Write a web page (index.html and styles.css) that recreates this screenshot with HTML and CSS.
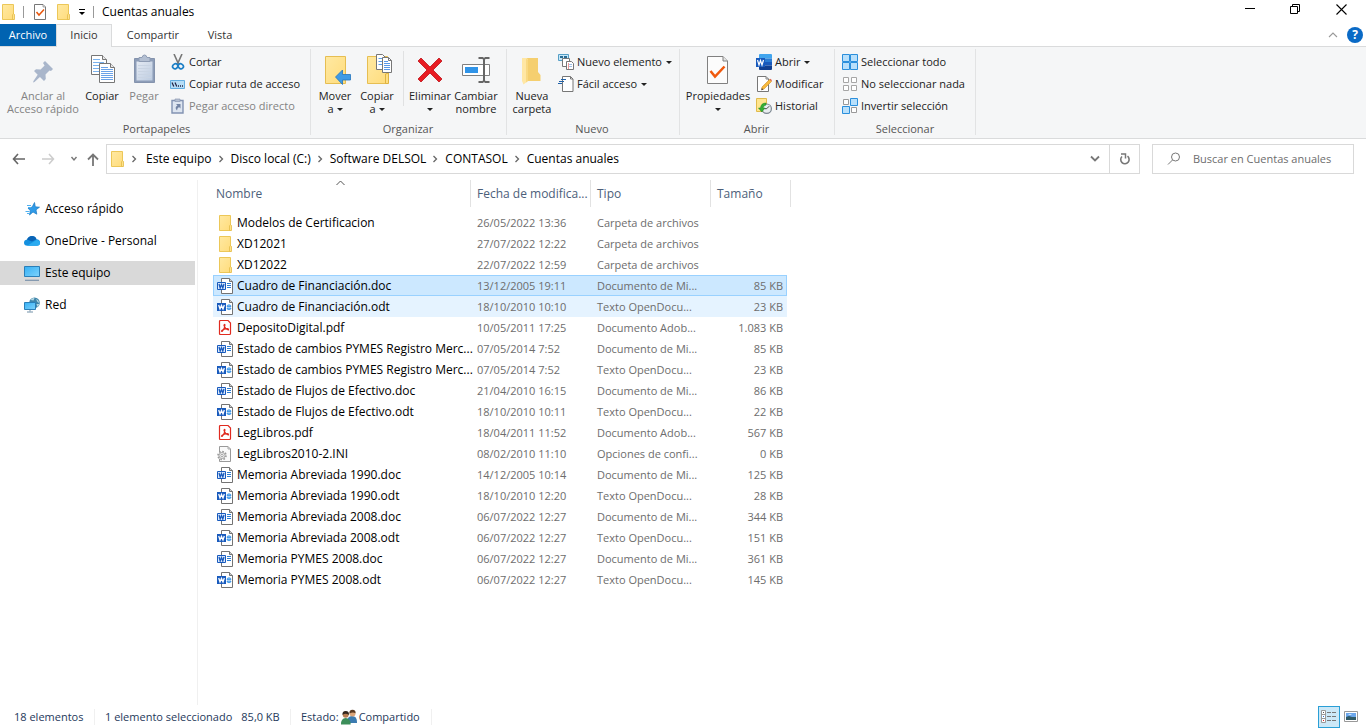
FILE: index.html
```html
<!DOCTYPE html>
<html lang="es">
<head>
<meta charset="utf-8">
<meta name="viewport" content="width=device-width, initial-scale=1">
<title>Cuentas anuales</title>
<link rel="stylesheet" href="styles.css">
</head>
<body>
<svg class="sprite" aria-hidden="true">
  <defs>
    <linearGradient id="gfold" x1="0" y1="0" x2="1" y2="1"><stop offset="0" stop-color="#ffe9a2"/><stop offset="1" stop-color="#ffdc7c"/></linearGradient>
    <linearGradient id="gscr" x1="0" y1="0" x2="1" y2="1"><stop offset="0" stop-color="#35b0f5"/><stop offset="1" stop-color="#7fd3fb"/></linearGradient>
    <linearGradient id="gpaste" x1="0" y1="0" x2="1" y2="1"><stop offset="0" stop-color="#e4eaf3"/><stop offset="1" stop-color="#bccbe0"/></linearGradient>
  </defs>
  <symbol id="folder" viewBox="0 0 16 16"><path d="M2.500.5h11v15h-11z" fill="url(#gfold)" stroke="#ecc758"/><path d="M12.500 15.500V11l1-1.500 1 1v5z" fill="#ffe28a" stroke="#e3bb48" stroke-width=".8"/></symbol>
  <symbol id="check" viewBox="0 0 16 16"><path d="M2.500.5h8.500l2.500 2.500v12.500h-11z" fill="#fff" stroke="#777"/><path d="M11 .5v2.500h2.500" fill="#ddd" stroke="#888" stroke-width=".7"/><path d="M4.500 8l2.500 3 5-5.500" fill="none" stroke="#e8560c" stroke-width="1.500"/></symbol>
  <symbol id="pin" viewBox="0 0 32 32"><g fill="#a9b6cb"><path d="M18 7l8 8-2 2-1.500-.6-4 4 .3 4.600-1.800 2-10-10 2-1.800 4.600.3 4-4L16 9z"/><path d="M11.500 19.500l2.500 2.500-6.500 6-1.500.5.500-1.500z"/></g></symbol>
  <symbol id="copy" viewBox="0 0 32 32"><path d="M5.500 1.500h11l4 4v15h-15z" fill="#fff" stroke="#767676"/><path d="M16.500 1.500v4h4" fill="#e8e8e8" stroke="#767676"/><path d="M7 5.500h7M7 8.500h11M7 11.500h11M7 14.500h11M7 17.500h11" stroke="#7ab2ee"/><path d="M13.500 9.500h11l4 4v15h-15z" fill="#fff" stroke="#767676"/><path d="M24.500 9.500v4h4" fill="#e8e8e8" stroke="#767676"/><path d="M15 13.500h7M15 15.500h12M15 17.500h12M15 19.500h12M15 21.500h12M15 23.500h12M15 25.500h12" stroke="#6aa2e8" /></symbol>
  <symbol id="paste" viewBox="0 0 32 32"><path d="M6.500 4.500h20v24h-20z" fill="#8d9db8" stroke="#8493ad"/><path d="M8.500 7.500h16v19h-16z" fill="url(#gpaste)"/><path d="M10 11.500h13M10 14.500h13M10 17.500h13M10 20.500h13M10 23.500h13" stroke="#c9d4e3"/><path d="M11 3.500h3q.5-2.500 2.500-2.500t2.500 2.500h3v4H11z" fill="#b3bfd2" stroke="#8e9cb4"/></symbol>
  <symbol id="cut" viewBox="0 0 16 16"><path d="M4 0l4.500 10M12 0L7.500 10" stroke="#777" stroke-width="1.600"/><ellipse cx="5.200" cy="12.300" rx="2.700" ry="2.300" transform="rotate(-35 5.200 12.300)" fill="none" stroke="#1c7fc6" stroke-width="1.700"/><ellipse cx="10.800" cy="12.300" rx="2.700" ry="2.300" transform="rotate(35 10.800 12.300)" fill="none" stroke="#1c7fc6" stroke-width="1.700"/></symbol>
  <symbol id="path" viewBox="0 0 16 16"><path d="M.5 4.500h14v8H.5z" fill="#b5ddf7" stroke="#63ade0"/><path d="M2 6.500l1.800 4M5 6.500l1.800 4" stroke="#224" stroke-width="1.200"/><path d="M8 10h1M10 10h1M12 10h1" stroke="#224" stroke-width="1.300"/></symbol>
  <symbol id="shortcut" viewBox="0 0 16 16"><path d="M2 2.500h11v12.500h-11z" fill="#dde5f0" stroke="#8293b2" stroke-width="1.400"/><path d="M5 1h5v2.500H5z" fill="#b5c0d2" stroke="#8c9ab3" stroke-width=".7"/><path d="M6 6h4.500v4.500L9 9q-2 1-2 3.500Q4 9.500 7.500 7.500z" fill="#7384a4"/></symbol>
  <symbol id="move" viewBox="0 0 32 32"><path d="M6.500 2.500h20v27h-20z" fill="url(#gfold)" stroke="#e6be52"/><path d="M16.500 23l7-7v4.500h8v5.500h-8v4.500z" fill="#3e9be6" stroke="#2375bd" stroke-width=".8"/></symbol>
  <symbol id="copyto" viewBox="0 0 32 32"><path d="M6.500 2.500h20v27h-20z" fill="url(#gfold)" stroke="#e6be52"/><path d="M24.500 29.500V20l3-1v10.500z" fill="#ffdf83" stroke="#dfb340"/><path d="M15.500.5h6l3 3v12h-9z" fill="#fff" stroke="#777"/><path d="M17.500 4.500h4M17.500 7.500h6M17.500 10.500h6" stroke="#5c9fe8"/><path d="M21.500 3.500h6l3 3v12h-9z" fill="#fff" stroke="#777"/><path d="M27.500 3.500v3h3" fill="none" stroke="#777"/><path d="M23 7.500h4M23 9.500h6M23 11.500h6M23 13.500h6M23 15.500h6" stroke="#5a98e6"/></symbol>
  <symbol id="delete" viewBox="0 0 32 32"><path d="M7 4l9 9 9-9 3 3-9 9 9 9-3 3-9-9-9 9-3-3 9-9-9-9z" fill="#e81c23" stroke="#bd1118" stroke-width=".8"/></symbol>
  <symbol id="rename" viewBox="0 0 32 32"><path d="M2.500 10.500h27v11h-27z" fill="#fff" stroke="#808080"/><path d="M5 13h13v6H5z" fill="#3094e8"/><path d="M18.500 4h4l1.500 1 1.500-1h4M18.500 28h4l1.500-1 1.500 1h4M24 5v22" fill="none" stroke="#666" stroke-width="2"/></symbol>
  <symbol id="newfolder" viewBox="0 0 32 32"><path d="M10 4h12v14l2.500 3v6H10z" fill="#f5cf6f"/><path d="M6 4h5l1 2v21l-4.500 3.500L6 27z" fill="#ffe7a5"/><path d="M12 6v21l-2 1.500V4.500z" fill="#f9d983"/></symbol>
  <symbol id="newitem" viewBox="0 0 16 16"><path d="M.5.500h10v6H.5z" fill="#c7e7f7" stroke="#559fc6"/><path d="M2 3h3M6 3h3" stroke="#2a6c94" stroke-width="2"/><path d="M4.500 4.500h7v8h-7z" fill="#fff" stroke="#777"/><path d="M8.500 7.500h5l2 2v6h-7z" fill="#fff" stroke="#777"/><path d="M10 10.500h4M10 12.500h4" stroke="#9bbfe8"/><path d="M10.500 9v6" stroke="#e99"/></symbol>
  <symbol id="easy" viewBox="0 0 16 16"><path d="M4.500.5h8l2.500 2.500v12.500H4.500z" fill="#fff" stroke="#777"/><path d="M12.500.5V3H15" fill="none" stroke="#777"/><path d="M3 3.500h5M1 5.500h5M0 7.500h4" stroke="#1f61a8" stroke-width="1.200"/></symbol>
  <symbol id="props" viewBox="0 0 32 32"><path d="M5.500 2.500h15.500l4.500 4.500v22.500h-20z" fill="#fcfcfc" stroke="#808080"/><path d="M21 2.500V7h4.500" fill="#e5e5e5" stroke="#808080"/><path d="M8.500 17l4.500 5.500L22.500 12.500" fill="none" stroke="#f0590d" stroke-width="2.500"/></symbol>
  <symbol id="word" viewBox="0 0 16 16"><path d="M4 0h11q1 0 1 1v3.500H3V1q0-1 1-1z" fill="#41a5ee"/><path d="M3 4.500h13V8H3z" fill="#2b7cd3"/><path d="M3 8h13v3.500H3z" fill="#185abd"/><path d="M3 11.500h13V15q0 1-1 1H4q-1 0-1-1z" fill="#103f91"/><path d="M0 4h9v9H0z" fill="#185abd"/><path d="M1.500 6l1.500 5 1.500-4.500L6 11l1.500-5" fill="none" stroke="#fff" stroke-width="1.200"/></symbol>
  <symbol id="edit" viewBox="0 0 16 16"><path d="M1.500.5h8.500l2.500 2.500v12.500h-11z" fill="#fff" stroke="#777"/><path d="M10 .5V3h2.500" fill="none" stroke="#888"/><path d="M13.500 3.500l2 2-7.500 7.500-2.500.8.500-2.800z" fill="#f8ba3c" stroke="#cf8b2b" stroke-width=".6"/><path d="M5.300 14.200l.6-2.300 1.500 1.500z" fill="#444"/><path d="M13.500 3.500l1-.8 1.500 1.500-.7 1z" fill="#de6a53"/></symbol>
  <symbol id="history" viewBox="0 0 16 16"><path d="M.5.500h10v13H.5z" fill="#ffe58e" stroke="#e0bb4c"/><circle cx="10.700" cy="10.700" r="4.700" fill="#e9edf0" stroke="#7c8791" stroke-width="1.200"/><path d="M10.700 10.700l2.500-2.500M10.700 10.700h-2" stroke="#444"/><path d="M10 5Q5 5 4.500 10h-2l3.300 4L9 10H7q.3-2.500 3-3z" fill="#35ae35" stroke="#198519" stroke-width=".5"/></symbol>
  <symbol id="selall" viewBox="0 0 16 16"><path d="M.5.5h7v7h-7zM8.500.5h7v7h-7zM.5 8.500h7v7h-7zM8.500 8.500h7v7h-7z" fill="#b9e0fb" stroke="#2b8fdc"/></symbol>
  <symbol id="selnone" viewBox="0 0 16 16"><path d="M1.500 1.500h5v5h-5zM9.500 1.500h5v5h-5zM1.500 9.500h5v5h-5zM9.500 9.500h5v5h-5z" fill="#fff" stroke="#a6a6a6"/></symbol>
  <symbol id="selinv" viewBox="0 0 16 16"><path d="M1.500 1.500h5v5h-5zM9.500 9.500h5v5h-5z" fill="#fff" stroke="#999"/><path d="M8.500.5h7v7h-7zM.5 8.500h7v7h-7z" fill="#b9e0fb" stroke="#2b8fdc"/></symbol>
  <symbol id="star" viewBox="0 0 16 16"><path d="M10.500 1.500l.8 4.300 4.200.4-3.500 2.600.8 4.400-3.800-2.200L5.500 14l.9-4.200L4 7l4-.8z" fill="#2f9be8" stroke="#1a78c2" stroke-width=".7"/><path d="M3 4.500h4M4 6.500h3M1.500 10.500h4M3 12.500h3" stroke="#4fb0f0"/></symbol>
  <symbol id="cloud" viewBox="0 0 16 16"><path d="M3.500 12.800Q0 12.800 0 9.800 0 7 3 6.500 4.500 3 8 3q3.200 0 4.500 3.300 3.500.4 3.500 3.500 0 3-3.200 3z" fill="#1490df"/><path d="M3 6.500Q4.500 3 8 3q3.200 0 4.500 3.300L8 8.500z" fill="#0a63b5"/><path d="M3 12.800L12.500 7q3.500 0 3.500 3 0 2.800-3.200 2.800z" fill="#2babf0"/></symbol>
  <symbol id="pc" viewBox="0 0 16 16"><path d="M.5 1.500h15v10H.5z" fill="url(#gscr)" stroke="#2a7fb8"/><path d="M1 15.300h14" stroke="#7c93ac" stroke-width="1.200"/></symbol>
  <symbol id="net" viewBox="0 0 16 16"><circle cx="10.500" cy="5.800" r="5.300" fill="#3f86ab"/><path d="M6.500 3q2-2.500 4-2l-1 2.500zM12 2q3 1 3 4l-1.500-1zM12.500 7h3l-2 3z" fill="#b7d8e2"/><path d="M.5 5.500h11v7H.5z" fill="url(#gscr)" stroke="#2a7fb8"/><path d="M6 13v1.500M3 15h6" stroke="#7391a8"/></symbol>
  <symbol id="doc" viewBox="0 0 16 16"><path d="M4.500.5h8l3 3v12h-11z" fill="#fff" stroke="#737373"/><path d="M12.500.5v3h3" fill="#ccc" stroke="#737373"/><path d="M10 5.500h4M10 7.500h4M10 9.500h4" stroke="#2b7cd3"/><path d="M.5 4.500h8v7h-8z" fill="#dceafc" stroke="#185abd"/><path d="M2 6l1.200 4 1.300-3.500L5.800 10 7 6" fill="none" stroke="#185abd" stroke-width="1.300"/></symbol>
  <symbol id="odt" viewBox="0 0 16 16"><path d="M4.500.5h8l3 3v12h-11z" fill="#fff" stroke="#737373"/><path d="M12.500.5v3h3" fill="#ccc" stroke="#737373"/><path d="M10 7.500q0-1.700 2-1.700t2 1.700zM10 9h4q0 1.700-2 1.700T10 9z" fill="#8cc7f7" stroke="#2b8ce3" stroke-width=".8"/><path d="M0 4h9v8H0z" fill="#185abd"/><path d="M1.700 6L3 10l1.500-3.500L6 10l1.300-4" fill="none" stroke="#fff" stroke-width="1.300"/></symbol>
  <symbol id="pdf" viewBox="0 0 16 16"><path d="M3.500.5H11l2.500 2.500v10.500q0 1-1 1h-9q-1 0-1-1v-12q0-1 1-1z" fill="#fff" stroke="#e02b20" stroke-width="1.200"/><path d="M5 11.500Q8 8.500 8 4.800q-.8-1-1 .5Q8 8.800 11.300 10q.7-1.300-1-1.400Q7 8.800 4.800 10.500q-.8 1 .2 1z" fill="none" stroke="#e02b20" stroke-width="1.200"/></symbol>
  <symbol id="ini" viewBox="0 0 16 16"><path d="M2.500.5h8.500l2.500 2.500v12.500h-11z" fill="#fafafa" stroke="#999"/><path d="M11 .5V3h2.500" fill="none" stroke="#aaa"/><circle cx="5" cy="9.500" r="4" fill="#f2f2f2" stroke="#999" stroke-width="1.600" stroke-dasharray="1.600 1.500"/><circle cx="5" cy="9.500" r="3" fill="#eee" stroke="#999" stroke-width=".8"/><circle cx="5" cy="9.500" r="1.200" fill="#fff" stroke="#888" stroke-width=".7"/></symbol>
  <symbol id="people" viewBox="0 0 16 16"><path d="M6 14q0-7 5-7t5 6v1z" fill="#3b7bb0"/><circle cx="11.500" cy="4.500" r="3" fill="#dca67a"/><path d="M8.500 4.500Q8 .8 11.500.8t3 3.500Q12 2.500 8.500 4.500z" fill="#5b3b22"/><path d="M0 15.500Q0 9 4.700 9t5 6.500z" fill="#3c8e5a"/><circle cx="4.700" cy="5.800" r="3" fill="#b97f54"/><path d="M1.500 6Q1 2 4.700 2t3.200 4Q4.500 3.500 1.500 6z" fill="#33271e"/></symbol>
  <symbol id="chev-r" viewBox="0 0 8 8"><path d="M2.500 1l3 3-3 3" fill="none" stroke="#666" stroke-width="1.300"/></symbol>
</svg>

<header class="titlebar">
  <svg class="i16"><use href="#folder"/></svg>
  <span class="bar"></span>
  <button class="quick" aria-label="Propiedades"><svg class="i16"><use href="#check"/></svg></button>
  <button class="quick" aria-label="Nueva carpeta"><svg class="i16"><use href="#folder"/></svg></button>
  <button aria-label="Personalizar"><svg width="8" height="8"><path d="M1 1.500h6" stroke="#000"/><path d="M1 4h6L4 7z"/></svg></button>
  <span class="bar"></span>
  <h1>Cuentas anuales</h1>
  <div class="winbtns">
    <button aria-label="Minimizar"><svg width="11" height="11"><path d="M1 4.500h10" stroke="#000"/></svg></button>
    <button aria-label="Restaurar"><svg width="11" height="11"><path d="M.5 2.500h7v7h-7zM2.500 2.500v-2h7v7h-2" fill="none" stroke="#000"/></svg></button>
    <button aria-label="Cerrar"><svg width="11" height="11"><path d="M.5.5l10 10M10.500.5l-10 10" stroke="#000" stroke-width="1.100"/></svg></button>
  </div>
</header>

<nav class="tabs">
  <button class="file">Archivo</button>
  <button class="on">Inicio</button>
  <button class="wide">Compartir</button>
  <button>Vista</button>
  <div class="tabend">
    <button aria-label="Minimizar la cinta"><svg width="10" height="6"><path d="M1 5l4-4 4 4" fill="none" stroke="#999" stroke-width="1.100"/></svg></button>
    <button class="help" aria-label="Ayuda">?</button>
  </div>
</nav>

<section class="ribbon">
  <div class="group g-clip">
    <div class="tools">
      <button class="big w80" disabled><svg class="i32"><use href="#pin"/></svg><span>Anclar al<br>Acceso rápido</span></button>
      <button class="big w38"><svg class="i32"><use href="#copy"/></svg><span>Copiar</span></button>
      <button class="big w46" disabled><svg class="i32"><use href="#paste"/></svg><span>Pegar</span></button>
      <div class="stack">
        <button><svg class="i16"><use href="#cut"/></svg>Cortar</button>
        <button><svg class="i16"><use href="#path"/></svg>Copiar ruta de acceso</button>
        <button disabled><svg class="i16"><use href="#shortcut"/></svg>Pegar acceso directo</button>
      </div>
    </div>
    <h2>Portapapeles</h2>
  </div>
  <div class="group g-org">
    <div class="tools">
      <button class="big w42"><svg class="i32"><use href="#move"/></svg><span>Mover<br>a<i class="caret"></i></span></button>
      <button class="big w42"><svg class="i32"><use href="#copyto"/></svg><span>Copiar<br>a<i class="caret"></i></span></button>
      <span class="split"></span>
      <button class="big w46"><svg class="i32"><use href="#delete"/></svg><span>Eliminar<br><i class="caret alone"></i></span></button>
      <button class="big w46"><svg class="i32"><use href="#rename"/></svg><span>Cambiar<br>nombre</span></button>
    </div>
    <h2>Organizar</h2>
  </div>
  <div class="group g-new">
    <div class="tools">
      <button class="big w46"><svg class="i32"><use href="#newfolder"/></svg><span>Nueva<br>carpeta</span></button>
      <div class="stack">
        <button><svg class="i16"><use href="#newitem"/></svg>Nuevo elemento<i class="caret"></i></button>
        <button><svg class="i16"><use href="#easy"/></svg>Fácil acceso<i class="caret"></i></button>
      </div>
    </div>
    <h2>Nuevo</h2>
  </div>
  <div class="group g-open">
    <div class="tools">
      <button class="big w70"><svg class="i32"><use href="#props"/></svg><span>Propiedades<br><i class="caret alone"></i></span></button>
      <div class="stack">
        <button><svg class="i16"><use href="#word"/></svg>Abrir<i class="caret"></i></button>
        <button><svg class="i16"><use href="#edit"/></svg>Modificar</button>
        <button><svg class="i16"><use href="#history"/></svg>Historial</button>
      </div>
    </div>
    <h2>Abrir</h2>
  </div>
  <div class="group g-sel">
    <div class="tools">
      <div class="stack">
        <button><svg class="i16"><use href="#selall"/></svg>Seleccionar todo</button>
        <button><svg class="i16"><use href="#selnone"/></svg>No seleccionar nada</button>
        <button><svg class="i16"><use href="#selinv"/></svg>Invertir selección</button>
      </div>
    </div>
    <h2>Seleccionar</h2>
  </div>
</section>

<section class="navrow">
  <div class="arrows">
    <button aria-label="Atrás"><svg width="13" height="12"><path d="M6 1L1.500 6 6 11M1.500 6H13" fill="none" stroke="#666" stroke-width="1.600"/></svg></button>
    <button aria-label="Adelante" disabled><svg width="13" height="12"><path d="M7 1l4.500 5L7 11M11.500 6H0" fill="none" stroke="#ccc" stroke-width="1.500"/></svg></button>
    <button class="slim" aria-label="Recientes"><svg width="8" height="6"><path d="M1.500 1L4 4l2.500-3" fill="none" stroke="#777" stroke-width="1.400"/></svg></button>
    <button class="slim" aria-label="Arriba"><svg width="12" height="13"><path d="M1 6.500l5-5 5 5M6 1.500V13" fill="none" stroke="#777" stroke-width="1.800"/></svg></button>
  </div>
  <div class="address">
    <svg class="i16"><use href="#folder"/></svg>
    <svg class="i8"><use href="#chev-r"/></svg><button>Este equipo</button>
    <svg class="i8"><use href="#chev-r"/></svg><button>Disco local (C:)</button>
    <svg class="i8"><use href="#chev-r"/></svg><button>Software DELSOL</button>
    <svg class="i8"><use href="#chev-r"/></svg><button>CONTASOL</button>
    <svg class="i8"><use href="#chev-r"/></svg><button>Cuentas anuales</button>
    <button class="drop" aria-label="Ubicaciones anteriores"><svg width="10" height="8"><path d="M1 1.500l4 4 4-4" fill="none" stroke="#777" stroke-width="1.800"/></svg></button>
    <button class="refresh" aria-label="Actualizar"><svg width="12" height="12"><path d="M3 3.500A4.200 4.200 0 1 0 8.500 3.200" fill="none" stroke="#777" stroke-width="1.600"/><path d="M2 1h4.500v4.500" fill="none" stroke="#777" stroke-width="1.500"/></svg></button>
  </div>
  <label class="search">
    <svg width="14" height="14"><circle cx="8.500" cy="5" r="4" fill="none" stroke="#777"/><path d="M5.500 8L1 12.500" stroke="#777"/></svg>
    <input type="text" placeholder="Buscar en Cuentas anuales" aria-label="Buscar en Cuentas anuales">
  </label>
</section>

<main class="body">
  <aside class="side">
    <a href="#"><svg class="i16"><use href="#star"/></svg>Acceso rápido</a>
    <a href="#"><svg class="i16"><use href="#cloud"/></svg>OneDrive - Personal</a>
    <a href="#" class="current"><svg class="i16"><use href="#pc"/></svg>Este equipo</a>
    <a href="#"><svg class="i16"><use href="#net"/></svg>Red</a>
  </aside>
  <div class="list">
    <table>
      <colgroup><col class="c-name"><col class="c-date"><col class="c-type"><col class="c-size"></colgroup>
      <thead><tr><th>Nombre<svg class="sort" width="9" height="6"><path d="M.5 5l4-4 4 4" fill="none" stroke="#555"/></svg></th><th>Fecha de modifica...</th><th>Tipo</th><th>Tamaño</th></tr></thead>
      <tbody>
        <tr><td><svg class="i16"><use href="#folder"/></svg>Modelos de Certificacion</td><td>26/05/2022 13:36</td><td>Carpeta de archivos</td><td></td></tr>
        <tr><td><svg class="i16"><use href="#folder"/></svg>XD12021</td><td>27/07/2022 12:22</td><td>Carpeta de archivos</td><td></td></tr>
        <tr><td><svg class="i16"><use href="#folder"/></svg>XD12022</td><td>22/07/2022 12:59</td><td>Carpeta de archivos</td><td></td></tr>
        <tr class="selected"><td><svg class="i16"><use href="#doc"/></svg>Cuadro de Financiación.doc</td><td>13/12/2005 19:11</td><td>Documento de Mi...</td><td>85 KB</td></tr>
        <tr class="hover"><td><svg class="i16"><use href="#odt"/></svg>Cuadro de Financiación.odt</td><td>18/10/2010 10:10</td><td>Texto OpenDocu...</td><td>23 KB</td></tr>
        <tr><td><svg class="i16"><use href="#pdf"/></svg>DepositoDigital.pdf</td><td>10/05/2011 17:25</td><td>Documento Adob...</td><td>1.083 KB</td></tr>
        <tr><td><svg class="i16"><use href="#doc"/></svg>Estado de cambios PYMES Registro Merc...</td><td>07/05/2014 7:52</td><td>Documento de Mi...</td><td>85 KB</td></tr>
        <tr><td><svg class="i16"><use href="#odt"/></svg>Estado de cambios PYMES Registro Merc...</td><td>07/05/2014 7:52</td><td>Texto OpenDocu...</td><td>23 KB</td></tr>
        <tr><td><svg class="i16"><use href="#doc"/></svg>Estado de Flujos de Efectivo.doc</td><td>21/04/2010 16:15</td><td>Documento de Mi...</td><td>86 KB</td></tr>
        <tr><td><svg class="i16"><use href="#odt"/></svg>Estado de Flujos de Efectivo.odt</td><td>18/10/2010 10:11</td><td>Texto OpenDocu...</td><td>22 KB</td></tr>
        <tr><td><svg class="i16"><use href="#pdf"/></svg>LegLibros.pdf</td><td>18/04/2011 11:52</td><td>Documento Adob...</td><td>567 KB</td></tr>
        <tr><td><svg class="i16"><use href="#ini"/></svg>LegLibros2010-2.INI</td><td>08/02/2010 11:10</td><td>Opciones de confi...</td><td>0 KB</td></tr>
        <tr><td><svg class="i16"><use href="#doc"/></svg>Memoria Abreviada 1990.doc</td><td>14/12/2005 10:14</td><td>Documento de Mi...</td><td>125 KB</td></tr>
        <tr><td><svg class="i16"><use href="#odt"/></svg>Memoria Abreviada 1990.odt</td><td>18/10/2010 12:20</td><td>Texto OpenDocu...</td><td>28 KB</td></tr>
        <tr><td><svg class="i16"><use href="#doc"/></svg>Memoria Abreviada 2008.doc</td><td>06/07/2022 12:27</td><td>Documento de Mi...</td><td>344 KB</td></tr>
        <tr><td><svg class="i16"><use href="#odt"/></svg>Memoria Abreviada 2008.odt</td><td>06/07/2022 12:27</td><td>Texto OpenDocu...</td><td>151 KB</td></tr>
        <tr><td><svg class="i16"><use href="#doc"/></svg>Memoria PYMES 2008.doc</td><td>06/07/2022 12:27</td><td>Documento de Mi...</td><td>361 KB</td></tr>
        <tr><td><svg class="i16"><use href="#odt"/></svg>Memoria PYMES 2008.odt</td><td>06/07/2022 12:27</td><td>Texto OpenDocu...</td><td>145 KB</td></tr>
      </tbody>
    </table>
  </div>
</main>

<footer class="status">
  <span class="cell count">18 elementos</span>
  <span class="cell picked"><span>1 elemento seleccionado</span><span>85,0 KB</span></span>
  <span class="cell state">Estado:<svg class="i16"><use href="#people"/></svg>Compartido</span>
  <div class="views">
    <button class="active" aria-label="Detalles"><svg width="18" height="16"><path d="M1.500 1.500h4v12h-4zM1.500 5.500h4M1.500 9.500h4" fill="#fff" stroke="#999"/><path d="M3 3.500h1" stroke="#555"/><path d="M3 7.500h1" stroke="#2a6fd0"/><path d="M3 11.500h1" stroke="#d22"/><path d="M7 3.500h4M12 3.500h4M7 7.500h4M12 7.500h4M7 11.500h4M12 11.500h4" stroke="#777"/></svg></button>
    <button aria-label="Iconos grandes"><svg width="14" height="12"><path d="M.5.5h13v10H.5z" fill="#fff" stroke="#999"/><path d="M2 2h10v4H2z" fill="#6ba7ec"/><path d="M2 6l3-1 3 1h4v3H2z" fill="#2f5a66"/><path d="M4 4q2-1.500 4 0z" fill="#fff"/></svg></button>
  </div>
</footer>
</body>
</html>
```
FILE: styles.css
```css
* { box-sizing: border-box; }
body {
  margin: 0;
  min-height: 100vh;
  display: flex;
  flex-direction: column;
  background: #fff;
  color: #000;
  font: 12px/16px "Open Sans", "Noto Sans", sans-serif;
}
button {
  border: 0;
  padding: 0;
  background: none;
  color: inherit;
  font: inherit;
  white-space: nowrap;
}
svg { display: block; flex: none; }
.sprite { position: absolute; width: 0; height: 0; }
.i8 { width: 8px; height: 8px; }
.i16 { width: 16px; height: 16px; }
.i32 { width: 32px; height: 32px; }
h1, h2 { margin: 0; font: inherit; }

/* Title bar */
.titlebar { display: flex; align-items: center; height: 24px; }
.bar { width: 1px; height: 12px; margin: 0 8px 0 7px; background: #999; }
.quick { margin-right: 7px; }
.winbtns { display: flex; margin-left: auto; align-items: center; height: 20px; padding-right: 2px; }
.winbtns button { width: 46px; height: 16px; display: flex; justify-content: center; }

/* Ribbon tabs */
.tabs { display: flex; height: 22px; padding-right: 3px; position: relative; z-index: 1; font-size: 11px; }
.tabs > button { width: 52px; height: 22px; color: #333; }
.tabs > .wide { width: 82px; }
.tabs > .file { width: 56px; background: #0063b1; color: #fff; }
.tabs > .on {
  width: 56px;
  height: 23px;
  background: #f5f6f7;
  border: 1px solid #dadbdc;
  border-width: 1px 1px 0;
  padding-bottom: 2px;
}
.tabend { display: flex; margin-left: auto; align-items: center; gap: 9px; }
.help {
  width: 16px;
  height: 16px;
  border-radius: 50%;
  background: #0a6ac6;
  color: #fff;
  font-size: 12px;
  font-weight: bold;
}

/* Ribbon */
.ribbon {
  display: flex;
  height: 93px;
  background: #f5f6f7;
  border: 1px solid #dadbdc;
  border-width: 1px 0;
  color: #222;
  font-size: 11px;
}
.group {
  display: flex;
  flex-direction: column;
  justify-content: space-between;
  margin: 2px 0 3px;
  padding: 2px 0 0 3px;
  border-right: 1px solid #e2e3e4;
}
.g-clip { width: 311px; }
.g-org { width: 196px; }
.g-new { width: 173px; padding-left: 2px; }
.g-open { width: 155px; }
.g-sel { width: 141px; padding-left: 4px; }
.group h2 { color: #555; text-align: center; line-height: 12px; padding-right: 4px; }
.g-clip h2 { padding-right: 0; }
.tools { display: flex; height: 66px; }
.big {
  display: flex;
  flex-direction: column;
  align-items: center;
  gap: 3px;
  padding-top: 3px;
  line-height: 13px;
}
.w38 { width: 38px; }
.w42 { width: 42px; }
.w46 { width: 46px; }
.w70 { width: 70px; }
.w80 { width: 80px; }
button:disabled { color: #838383; }
.stack { padding-left: 3px; }
.stack button { display: flex; align-items: center; gap: 3px; height: 22px; }
.caret {
  display: inline-block;
  border: 3px solid transparent;
  border-top-color: #222;
  border-bottom: 0;
  margin-left: 3px;
  vertical-align: 2px;
}
.caret.alone { margin: 0; }
.stack .caret { margin-left: 1px; }
.split { width: 1px; height: 55px; margin: 0 3px 0 5px; background: #e0e1e2; }

/* Navigation row */
.navrow { display: flex; padding: 5px 12px 6px; height: 41px; }
.arrows { display: flex; align-items: center; width: 94px; }
.arrows button { width: 28px; display: flex; }
.arrows button:first-child { width: 30px; }
.arrows button.slim { width: 17px; }
.address {
  flex: 1;
  display: flex;
  align-items: center;
  border: 1px solid #d9d9d9;
  padding-left: 2px;
}
.address .i8 { margin: 0 6px 0 5px; }
.address .i16 + .i8 { margin: 0 8px 0 5px; }
.address .drop { display: flex; margin-left: auto; padding: 0 9px; }
.address .refresh {
  display: flex;
  align-items: center;
  justify-content: center;
  align-self: stretch;
  width: 30px;
  border-left: 1px solid #d9d9d9;
}
.search {
  display: flex;
  align-items: center;
  width: 202px;
  margin-left: 12px;
  padding-left: 14px;
  gap: 12px;
  border: 1px solid #d9d9d9;
}
.search input {
  flex: 1;
  min-width: 0;
  border: 0;
  padding: 0;
  outline: 0;
  background: none;
  font: inherit;
  font-size: 11px;
}
.search input::placeholder { color: #6d6d6d; opacity: 1; }

/* Body */
.body { flex: 1; display: flex; }
.side {
  display: flex;
  flex-direction: column;
  gap: 8px;
  width: 198px;
  padding: 17px 2px 0 0;
  border-right: 1px solid #f0f0f0;
}
.side a {
  display: flex;
  align-items: center;
  gap: 5px;
  height: 24px;
  padding-left: 24px;
  color: #000;
  text-decoration: none;
}
.side .current { background: #d9d9d9; }
.list { flex: 1; padding-left: 15px; }
table { width: 574px; table-layout: fixed; border-collapse: separate; border-spacing: 0; }
.c-name { width: 257px; }
.c-date, .c-type { width: 120px; }
th, td { padding: 0 0 0 6px; text-align: left; font-weight: normal; white-space: nowrap; }
th { height: 27px; color: #4c607a; position: relative; border-left: 1px solid #e2e2e2; }
th:first-child { padding-left: 3px; border: 0; }
th:last-child::after {
  content: "";
  position: absolute;
  top: 0;
  bottom: 0;
  right: -4px;
  width: 1px;
  background: #e2e2e2;
}
.sort { position: absolute; top: 0; left: 123px; }
tbody::before { content: ""; display: block; height: 5px; }
td {
  height: 21px;
  padding-left: 7px;
  color: #6d6d6d;
  border: 1px solid transparent;
  border-width: 1px 0;
  font-size: 11px;
}
td:first-child { padding-left: 4px; color: #000; font-size: 12px; }
td:first-child svg { display: inline-block; margin-right: 4px; vertical-align: top; }
td:last-child { padding: 0 4px 0 0; text-align: right; }
.selected td { background: #cce8ff; border-color: #99d1ff; }
.selected td:first-child { border-left: 1px solid #99d1ff; padding-left: 3px; }
.selected td:last-child { border-right: 1px solid #99d1ff; padding-right: 3px; }
.hover td { background: #e5f3ff; }

/* Status bar */
.status {
  display: flex;
  align-items: center;
  height: 23px;
  padding-right: 8px;
  color: #1e395b;
  font-size: 11px;
  white-space: nowrap;
}
.cell { display: flex; height: 16px; border-right: 1px solid #f0f0f0; }
.count { width: 95px; padding-left: 14px; }
.picked { width: 196px; padding-left: 10px; gap: 9px; }
.state { width: 141px; padding-left: 10px; gap: 2px; }
.views { display: flex; align-items: center; gap: 4px; margin-left: auto; }
.views .active {
  display: flex;
  align-items: center;
  justify-content: center;
  width: 22px;
  height: 22px;
  background: #cce8f7;
  border: 1px solid #2a9fd6;
}
```
